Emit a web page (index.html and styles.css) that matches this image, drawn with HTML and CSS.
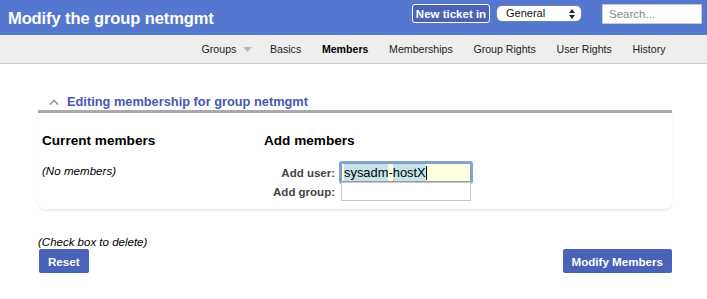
FILE: index.html
```
<!DOCTYPE html>
<html>
<head>
<meta charset="utf-8">
<link rel="stylesheet" href="styles.css">
</head>
<body>
<div class="header">
  <h1 class="title">Modify the group netmgmt</h1>
  <div class="header-tools">
    <button class="newticket">New ticket in</button>
    <div class="queue-select">General<svg class="updown" width="6" height="10" viewBox="0 0 6 10"><path d="M3 0 L6 4 L0 4 Z M3 10 L6 6 L0 6 Z" fill="#222"/></svg></div>
    <input class="search" type="text" placeholder="Search...">
  </div>
</div>
<div class="nav">
  <span class="nav-item groups">Groups <svg class="tri" width="9" height="5" viewBox="0 0 9 5"><path d="M0 0 L9 0 L4.5 5 Z" fill="#bbb"/></svg></span>
  <span class="nav-item">Basics</span>
  <span class="nav-item active">Members</span>
  <span class="nav-item">Memberships</span>
  <span class="nav-item">Group Rights</span>
  <span class="nav-item">User Rights</span>
  <span class="nav-item">History</span>
</div>
<div class="main">
  <div class="titlebox">
    <div class="titlebox-head">
      <svg class="chev" width="10" height="6" viewBox="0 0 10 6"><path d="M1 5.5 L5 1.5 L9 5.5" fill="none" stroke="#999" stroke-width="1.6"/></svg>
      <span class="titlebox-title">Editing membership for group netmgmt</span>
    </div>
    <div class="titlebox-body">
      <div class="col-current">
        <h3 class="colhead">Current members</h3>
        <div class="none">(No members)</div>
      </div>
      <div class="col-add">
        <h3 class="colhead">Add members</h3>
        <div class="addgrid">
          <label class="lbl">Add user:</label>
          <div class="userbox focused"><span class="sel">sysadm</span><span class="dash">-</span><span class="sel">hostX</span><span class="caret"></span></div>
          <label class="lbl">Add group:</label>
          <div class="userbox"></div>
        </div>
      </div>
    </div>
  </div>
  <div class="note">(Check box to delete)</div>
  <div class="buttons">
    <button class="btn">Reset</button>
    <button class="btn">Modify Members</button>
  </div>
</div>
</body>
</html>
```
FILE: styles.css
```
* { box-sizing: border-box; }
body {
  margin: 0;
  font-family: "Liberation Sans", Arial, sans-serif;
  background: #fff;
  color: #000;
}
.header {
  height: 35px;
  background: #5477cf;
  display: flex;
  align-items: flex-start;
  justify-content: space-between;
  padding: 0 5px 0 8px;
}
.title {
  margin: 0;
  padding-top: 9px;
  font-size: 16.5px;
  font-weight: bold;
  color: #fff;
  letter-spacing: -0.1px;
}
.header-tools {
  display: flex;
  align-items: flex-start;
  padding-top: 4px;
}
.newticket {
  height: 19px;
  width: 78px;
  padding: 0;
  margin-top: 0;
  background: #4a62b8;
  color: #fff;
  border: 1px solid #fff;
  border-radius: 3px;
  font-family: "Liberation Sans", Arial, sans-serif;
  font-weight: bold;
  font-size: 11.5px;
}
.queue-select {
  margin-left: 7px;
  margin-top: 2px;
  width: 84px;
  height: 15px;
  background: #fff;
  border-radius: 5px;
  font-size: 11px;
  line-height: 15px;
  padding: 0 6px 0 9px;
  display: flex;
  justify-content: space-between;
  align-items: center;
  color: #111;
  box-shadow: 0 0 0 0.5px #888;
}
.search {
  margin-left: 21px;
  width: 100px;
  height: 20px;
  border: 1px solid #ccc;
  padding: 0 6px;
  font-family: "Liberation Sans", Arial, sans-serif;
  font-size: 11.5px;
}
.search::placeholder { color: #888; }
.nav {
  height: 29px;
  background: #eee;
  border-bottom: 1px solid #ccc;
  display: flex;
  justify-content: flex-end;
  align-items: center;
  padding-right: 41.5px;
  font-size: 10.6px;
  color: #222;
}
.nav-item { margin-left: 20.7px; display: flex; align-items: center; }
.nav-item.groups { margin-right: -3px; }
.nav-item .tri { margin-left: 7px; }
.nav-item.active { font-weight: bold; color: #000; }
.main {
  padding: 0 35px 0 38px;
}
.titlebox {
  margin-top: 29px;
}
.titlebox-head {
  display: flex;
  align-items: center;
  padding-left: 11px;
  height: 20px;
  border-bottom: 3px solid #aaa;
}
.chev { margin-right: 8px; margin-top: 1px; }
.titlebox-title {
  color: #4659ad;
  font-weight: bold;
  font-size: 12.8px;
}
.titlebox-body {
  display: flex;
  height: 97px;
  border-radius: 0 0 8px 8px;
  box-shadow: 0 1px 2px rgba(0,0,0,0.08);
  border-bottom: 1px solid #eee;
  padding: 20px 4px 0 4px;
}
.col-current { width: 222px; }
.colhead {
  margin: 0;
  font-size: 13.6px;
  font-weight: bold;
}
.none {
  margin-top: 16px;
  font-style: italic;
  font-size: 11.6px;
}
.addgrid {
  margin-top: 15px;
  display: grid;
  grid-template-columns: 71px 130px;
  column-gap: 6px;
  row-gap: 0;
}
.lbl {
  text-align: right;
  font-weight: bold;
  font-size: 11.5px;
  color: #444;
  align-self: center;
}
.userbox {
  height: 19px;
  border: 1px solid #c8c8c8;
  background: #fff;
  font-size: 12.9px;
  line-height: 17px;
  padding-left: 2px;
  display: flex;
  align-items: center;
}
.userbox.focused {
  background: #fefee0;
  border-color: #999;
  box-shadow: 0 0 0 2px #7aa7e0;
  border-radius: 1px;
}
.sel { background: #c4e4ea; }
.dash { background: #fefee0; }
.caret { display: inline-block; width: 1px; height: 14px; background: #000; }
.note {
  margin-top: 26px;
  font-style: italic;
  font-size: 11.5px;
}
.buttons {
  margin-top: 1px;
  display: flex;
  justify-content: space-between;
  padding-left: 1px;
  padding-right: 0;
}
.btn {
  height: 24px;
  background: #4a62b8;
  color: #fff;
  border: none;
  border-radius: 2px;
  font-family: "Liberation Sans", Arial, sans-serif;
  font-weight: bold;
  font-size: 11.6px;
  padding: 0 9px;
}
```
